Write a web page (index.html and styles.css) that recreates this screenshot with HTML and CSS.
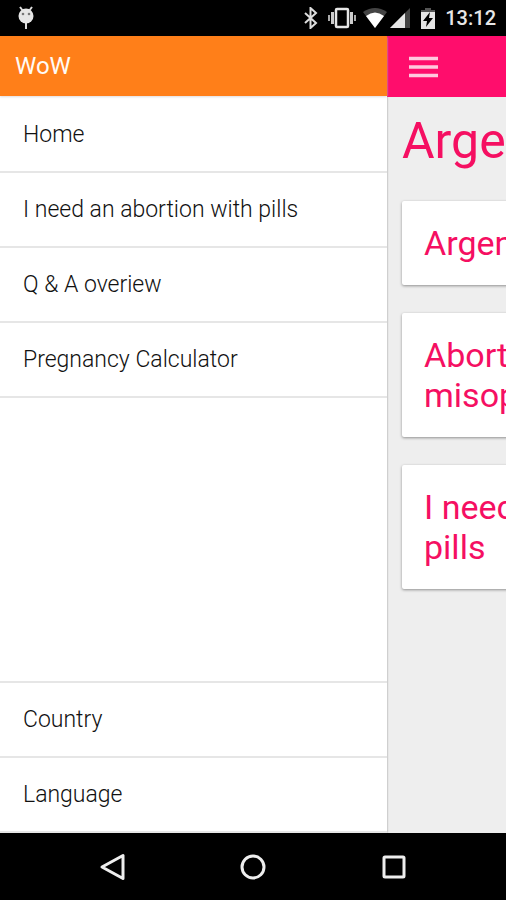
FILE: index.html
```html
<!DOCTYPE html>
<html lang="en">
<head>
<meta charset="utf-8">
<meta name="viewport" content="width=device-width, initial-scale=1">
<title>WoW</title>
<link rel="stylesheet" href="styles.css">
</head>
<body>
<div class="status">
  <svg class="status-debug" width="18" height="24" viewBox="0 0 18 24" aria-hidden="true">
    <path d="M3 1l3 4M15 1l-3 4M9 17v6" fill="none" stroke="#ddd" stroke-width="2"/>
    <circle cx="9" cy="10" r="7.500" fill="#e6e6e6"/>
    <circle cx="6" cy="8" r="1.300" fill="#777"/><circle cx="12" cy="8" r="1.300" fill="#777"/>
  </svg>
  <div class="status-icons">
    <svg width="14" height="22" viewBox="0 0 14 22" aria-hidden="true">
      <path d="M1 6l11 10-5.500 5V1L12 6 1 16" fill="none" stroke="#ddd" stroke-width="2"/>
    </svg>
    <svg class="vibrate" width="28" height="22" viewBox="0 0 28 22" aria-hidden="true">
      <rect x="8" y="2" width="12" height="18" rx="1" fill="none" stroke="#e6e6e6" stroke-width="2.500"/>
      <path d="M4.500 5v12M23.500 5v12" stroke="#ccc" stroke-width="3"/>
      <path d="M1 8v6M27 8v6" stroke="#aaa" stroke-width="2"/>
    </svg>
    <svg class="wifi" width="24" height="20" viewBox="0 0 24 20" aria-hidden="true">
      <path d="M0 4Q12-4 24 4L12 20z" fill="#444"/>
      <path d="M3 8Q12 1 21 8L12 20z" fill="#fff"/>
    </svg>
    <svg class="signal" width="20" height="20" viewBox="0 0 20 20" aria-hidden="true">
      <path d="M0 20L20 0v20z" fill="#444"/>
      <path d="M0 20L15 5v15z" fill="#e6e6e6"/>
    </svg>
    <svg class="battery" width="14" height="21" viewBox="0 0 14 21" aria-hidden="true">
      <path d="M4 0h6v2h4v5H0V2h4z" fill="#555"/>
      <path d="M0 4h14v17H0z" fill="#e6e6e6"/>
      <path d="M9 4l-7 9h4l-1 6 7-9H8z" fill="#000"/>
    </svg>
    <time class="clock">13:12</time>
  </div>
</div>

<div class="screen">
  <nav class="drawer" aria-label="Menu">
    <h2 class="drawer-title">WoW</h2>
    <ul class="menu">
      <li><a href="#home">Home</a></li>
      <li><a href="#pills">I need an abortion with pills</a></li>
      <li><a href="#qa">Q &amp; A overiew</a></li>
      <li><a href="#calculator">Pregnancy Calculator</a></li>
    </ul>
    <ul class="menu menu-bottom">
      <li><a href="#country">Country</a></li>
      <li><a href="#language">Language</a></li>
    </ul>
  </nav>

  <div class="page">
    <header class="toolbar">
      <button class="toggle" type="button" aria-label="Toggle menu">
        <svg width="29" height="22" viewBox="0 0 29 22" aria-hidden="true">
          <path d="M0 2.500h29M0 11h29M0 19.500h29" stroke="#ffc9de" stroke-width="3.500"/>
        </svg>
      </button>
    </header>
    <main class="content">
      <h1 class="title">Argentina</h1>
      <a class="card" href="#argentina">Argentina</a>
      <a class="card" href="#misoprostol">Abortion with<br>misoprostol</a>
      <a class="card" href="#need-pills">I need an abortion with<br>pills</a>
    </main>
  </div>
</div>

<div class="navbar">
  <button type="button" aria-label="Back">
    <svg width="28" height="30" viewBox="0 0 28 30" aria-hidden="true"><path d="M25 3.500v23L4 15z" fill="none" stroke="#eee" stroke-width="3" stroke-linejoin="round"/></svg>
  </button>
  <button type="button" aria-label="Home screen">
    <svg width="28" height="30" viewBox="0 0 28 30" aria-hidden="true"><circle cx="14" cy="15" r="11" fill="none" stroke="#eee" stroke-width="3"/></svg>
  </button>
  <button type="button" aria-label="Recent apps">
    <svg width="28" height="30" viewBox="0 0 28 30" aria-hidden="true"><rect x="4" y="5" width="20" height="20" rx="1" fill="none" stroke="#eee" stroke-width="3"/></svg>
  </button>
</div>
</body>
</html>
```
FILE: styles.css
```css
* {
  box-sizing: border-box;
}

body {
  margin: 0;
  min-height: 100vh;
  display: flex;
  flex-direction: column;
  overflow-x: hidden;
  background: #000;
  font-family: Roboto, sans-serif;
}

button {
  display: flex;
  padding: 0;
  border: 0;
  background: none;
}

svg {
  display: block;
}

.status {
  display: flex;
  align-items: center;
  justify-content: space-between;
  height: 36px;
  padding: 0 10px 0 17px;
}

.status-icons {
  display: flex;
  align-items: center;
}

.vibrate {
  margin-left: 10px;
}

.wifi {
  margin-left: 7px;
}

.signal {
  margin-left: 3px;
}

.battery {
  margin-left: 11px;
}

.clock {
  margin-left: 10px;
  color: #e6e6e6;
  font-size: 20px;
  font-weight: 500;
}

.screen {
  flex: 1;
  display: flex;
  overflow: hidden;
  background: #eee;
}

.drawer {
  flex: none;
  display: flex;
  flex-direction: column;
  width: calc(100vw - 119px);
  background: #fff;
  box-shadow: 0 0 2px rgba(0, 0, 0, 0.4);
  z-index: 1;
}

.drawer-title {
  height: 60px;
  margin: 0;
  padding: 0 15px;
  background: #ff7f19;
  color: #fffaf5;
  font-size: 24px;
  font-weight: 400;
  line-height: 60px;
  box-shadow: 0 1px 2px #e0dcdc;
}

.menu {
  margin: 2px 0 0;
  padding: 0;
  list-style: none;
}

.menu a {
  display: flex;
  align-items: center;
  height: 75px;
  padding: 0 23px;
  border-bottom: 2px solid #e6e6e6;
  color: #111;
  font-size: 23px;
  font-weight: 300;
  text-decoration: none;
}

.menu-bottom {
  margin-top: auto;
  border-top: 2px solid #e6e6e6;
}

.page {
  flex: none;
  width: 100vw;
}

.toolbar {
  display: flex;
  align-items: center;
  height: 61px;
  padding: 0 22px;
  background: #ff0d6c;
}

.content {
  display: flex;
  flex-direction: column;
  gap: 28px;
  padding: 15px;
  color: #f50f62;
}

.title {
  margin: 0 0 3px;
  font-size: 50px;
  font-weight: 400;
  line-height: 58px;
}

.card {
  padding: 22px;
  border-radius: 2px;
  background: #fff;
  box-shadow: 0 1px 3px rgba(0, 0, 0, 0.4);
  color: inherit;
  font-size: 34px;
  line-height: 40px;
  text-decoration: none;
}

.navbar {
  display: flex;
  align-items: center;
  justify-content: space-between;
  height: 67px;
  padding: 0 98px;
}
```
